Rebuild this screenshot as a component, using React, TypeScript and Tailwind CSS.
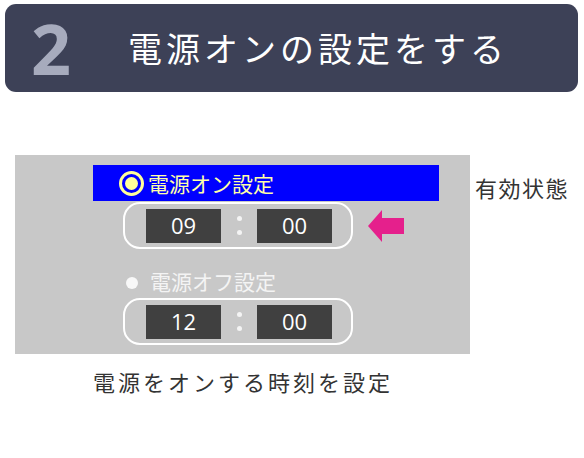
import React from "react";

const JP = { fontFamily: '"Noto Sans CJK JP", "Noto Sans", sans-serif' };

function TimeCapsule({ h, m }: { h: string; m: string }) {
  return (
    <div className="ml-[108px] flex h-[47px] w-[230px] items-center rounded-[17px] border-[2.5px] border-white pl-[21px]">
      <div className="flex h-[34px] w-[75px] items-center justify-center bg-[#404040] text-[22px] text-white" style={{ fontFamily: '"Open Sans", "Noto Sans", sans-serif' }}>{h}</div>
      <div className="flex w-[36px] flex-col items-center justify-center gap-[9px]">
        <div className="h-[5px] w-[5px] rounded-full bg-[#f4f4f4]" />
        <div className="h-[5px] w-[5px] rounded-full bg-[#f4f4f4]" />
      </div>
      <div className="flex h-[34px] w-[75px] items-center justify-center bg-[#404040] text-[22px] text-white" style={{ fontFamily: '"Open Sans", "Noto Sans", sans-serif' }}>{m}</div>
    </div>
  );
}

export default function App() {
  return (
    <div className="h-[458px] w-[584px] bg-white" style={JP}>
      <div className="pl-[5px] pr-[6px] pt-[4px]">
        <div className="flex h-[88px] items-center rounded-[11px] bg-[#3d4157]">
          <span className="ml-[26px] w-[44px] text-[70px] font-bold leading-none text-[#a7abbd]" style={{ fontFamily: '"Open Sans", "Noto Sans", sans-serif' }}>2</span>
          <span className="ml-[53px] text-[34px] leading-none tracking-[4px] text-white">電源オンの設定をする</span>
        </div>
      </div>
      <div className="mt-[63px] flex">
        <div className="ml-[15px] h-[199px] w-[455px] bg-[#c8c8c8] pt-[10px]">
          <div className="ml-[78px] flex h-[36px] w-[346px] items-center bg-[#0000ff]">
            <div className="ml-[26px] flex h-[25px] w-[25px] items-center justify-center rounded-full border-[3px] border-[#ffff9a]">
              <div className="h-[13px] w-[13px] rounded-full bg-[#ffff9a]" />
            </div>
            <span className="ml-[4px] text-[21px] leading-none text-[#ffffa8]">電源オン設定</span>
          </div>
          <div className="mt-[1px] flex items-center">
            <TimeCapsule h="09" m="00" />
            <svg className="ml-[15px]" width="36" height="32" viewBox="0 0 36 32">
              <polygon points="0,16 14,0 14,8 36,8 36,24 14,24 14,32" fill="#e5208c" />
            </svg>
          </div>
          <div className="mt-[18px] flex h-[28px] items-center">
            <div className="ml-[111px] mt-[4px] h-[12px] w-[12px] rounded-full bg-[#f8f8f8]" />
            <span className="ml-[12px] text-[21px] leading-none text-[#f4f4f4]">電源オフ設定</span>
          </div>
          <div className="mt-[3px]">
            <TimeCapsule h="12" m="00" />
          </div>
        </div>
        <div className="ml-[5px] mt-[21px] text-[22px] leading-none tracking-[1.5px] text-[#333333]">有効状態</div>
      </div>
      <div className="ml-[93px] mt-[16px] text-[22px] leading-none tracking-[3px] text-[#333333]">電源をオンする時刻を設定</div>
    </div>
  );
}
